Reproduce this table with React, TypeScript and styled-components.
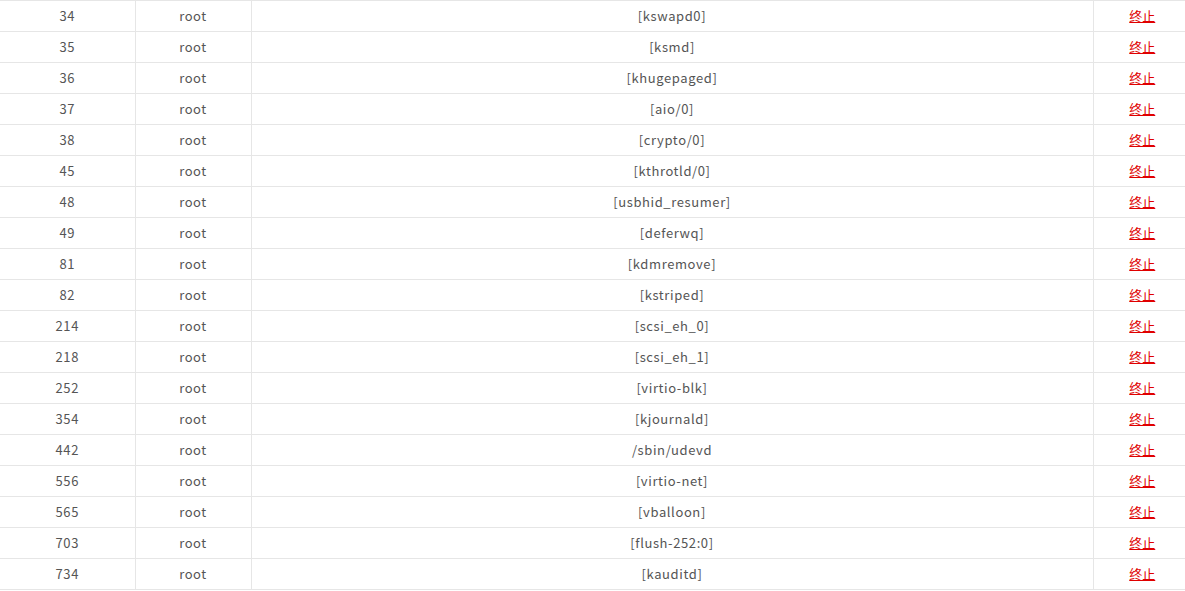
import React from "react";
import styled, { createGlobalStyle } from "styled-components";

const Global = createGlobalStyle`
  html, body { margin: 0; padding: 0; background: #fff; }
  body { font-family: "Microsoft YaHei", "Noto Sans CJK SC", "Noto Sans", sans-serif; }
`;

const Table = styled.table`
  width: 1185px;
  border-collapse: collapse;
  table-layout: fixed;
  font-size: 13px;
  color: #555;
  letter-spacing: 0.6px;
`;

const Row = styled.tr`
  height: 31px;
`;

const Cell = styled.td<{ $w?: number }>`
  ${(p) => (p.$w ? `width: ${p.$w}px;` : "")}
  border-top: 1px solid #e6e6e6;
  border-bottom: 1px solid #e6e6e6;
  border-left: 1px solid #e6e6e6;
  padding: 0;
  text-align: center;
  vertical-align: middle;
  line-height: 30px;
  &:first-child { border-left: none; }
`;

const KillLink = styled.a`
  color: #e00000;
  text-decoration: underline;
  cursor: pointer;
  letter-spacing: 0;
  margin-left: 6px;
`;

const rows: [number, string][] = [
  [34, "[kswapd0]"],
  [35, "[ksmd]"],
  [36, "[khugepaged]"],
  [37, "[aio/0]"],
  [38, "[crypto/0]"],
  [45, "[kthrotld/0]"],
  [48, "[usbhid_resumer]"],
  [49, "[deferwq]"],
  [81, "[kdmremove]"],
  [82, "[kstriped]"],
  [214, "[scsi_eh_0]"],
  [218, "[scsi_eh_1]"],
  [252, "[virtio-blk]"],
  [354, "[kjournald]"],
  [442, "/sbin/udevd"],
  [556, "[virtio-net]"],
  [565, "[vballoon]"],
  [703, "[flush-252:0]"],
  [734, "[kauditd]"],
];

export default function App() {
  return (
    <>
      <Global />
      <Table>
        <colgroup>
          <col style={{ width: 135 }} />
          <col style={{ width: 116 }} />
          <col style={{ width: 842 }} />
          <col />
        </colgroup>
        <tbody>
          {rows.map(([pid, cmd]) => (
            <Row key={pid}>
              <Cell>{pid}</Cell>
              <Cell>root</Cell>
              <Cell>{cmd}</Cell>
              <Cell>
                <KillLink>终止</KillLink>
              </Cell>
            </Row>
          ))}
        </tbody>
      </Table>
    </>
  );
}
